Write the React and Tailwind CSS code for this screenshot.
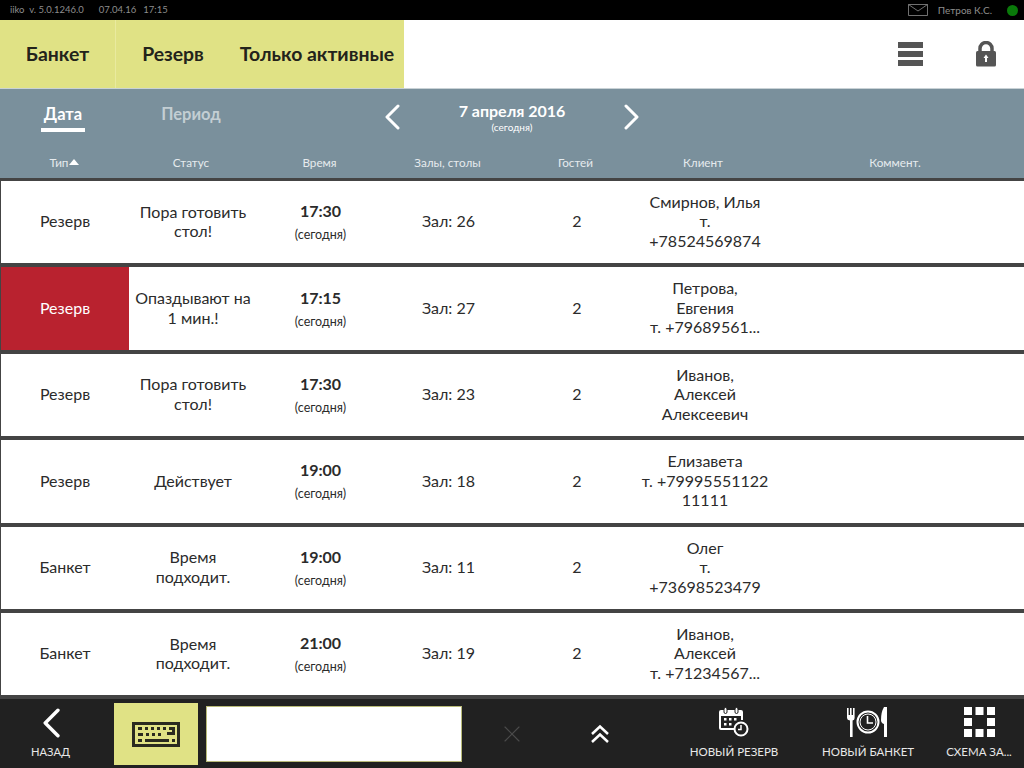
import { X } from 'lucide-react';

const rows = [
  { type: 'Резерв', status: ['Пора готовить', 'стол!'], time: '17:30', hall: 'Зал: 26', client: ['Смирнов, Илья', 'т.', '+78524569874'] },
  { type: 'Резерв', late: true, status: ['Опаздывают на', '1 мин.!'], time: '17:15', hall: 'Зал: 27', client: ['Петрова,', 'Евгения', 'т. +79689561...'] },
  { type: 'Резерв', status: ['Пора готовить', 'стол!'], time: '17:30', hall: 'Зал: 23', client: ['Иванов,', 'Алексей', 'Алексеевич'] },
  { type: 'Резерв', status: ['Действует'], time: '19:00', hall: 'Зал: 18', client: ['Елизавета', 'т. +79995551122', '11111'] },
  { type: 'Банкет', status: ['Время', 'подходит.'], time: '19:00', hall: 'Зал: 11', client: ['Олег', 'т.', '+73698523479'] },
  { type: 'Банкет', status: ['Время', 'подходит.'], time: '21:00', hall: 'Зал: 19', client: ['Иванов,', 'Алексей', 'т. +71234567...'] },
];

const Lines = ({ items, className }) => (
  <div className={className}>
    {items.map((line, idx) => (
      <div key={idx}>{line}</div>
    ))}
  </div>
);

const Chevron = ({ dir = 'left', className }) => (
  <svg className={className} width="16" height="26" viewBox="0 0 16 26" fill="none" stroke="#fff" strokeWidth="3" strokeLinecap="round" strokeLinejoin="round">
    <polyline points={dir === 'left' ? '14,2 3,13 14,24' : '2,2 13,13 2,24'} />
  </svg>
);

const DoubleUp = ({ className }) => (
  <svg className={className} width="20" height="20" viewBox="0 0 20 20" fill="none" stroke="#fff" strokeWidth="2.500">
    <polyline points="2,10 10,2.500 18,10" />
    <polyline points="2,18 10,10.500 18,18" />
  </svg>
);

const KeyboardIcon = () => (
  <svg width="48" height="25" viewBox="0 0 48 25">
    <path fill="#2a2a20" fillRule="evenodd" d="M0 0h48v25H0z M3 3v19h42V3z" />
    <g fill="#2a2a20">
      <rect x="6" y="5" width="4" height="3" />
      <rect x="13" y="5" width="3" height="3" />
      <rect x="19" y="5" width="3" height="3" />
      <rect x="25" y="5" width="3" height="3" />
      <rect x="31" y="5" width="3" height="3" />
      <path d="M37 5h6v8h-8v-3h5V8h-3z" />
      <rect x="6" y="11" width="5" height="3" />
      <rect x="14" y="11" width="3" height="3" />
      <rect x="20" y="11" width="3" height="3" />
      <rect x="26" y="11" width="3" height="3" />
      <rect x="6" y="17" width="4" height="3" />
      <rect x="13" y="17" width="24" height="3" />
      <rect x="40" y="17" width="3" height="3" />
    </g>
  </svg>
);

const CalendarClockIcon = () => (
  <svg width="30" height="30" viewBox="0 0 30 30">
    <path fill="none" stroke="#fff" strokeWidth="2" d="M17 22H2a1 1 0 0 1-1-1V5a1 1 0 0 1 1-1h20a1 1 0 0 1 1 1v8" />
    <path fill="#fff" d="M1 5h22v4H1z" />
    <rect x="5" y="0.5" width="3" height="6" rx="1.5" fill="#fff" stroke="#212121" />
    <rect x="16" y="0.5" width="3" height="6" rx="1.5" fill="#fff" stroke="#212121" />
    <g fill="#fff">
      <rect x="5" y="11" width="2.5" height="2.5" />
      <rect x="10" y="11" width="2.5" height="2.5" />
      <rect x="15" y="11" width="2.5" height="2.5" />
      <rect x="5" y="16" width="2.5" height="2.5" />
      <rect x="10" y="16" width="2.5" height="2.5" />
    </g>
    <circle cx="22" cy="22" r="6.5" fill="#212121" stroke="#fff" strokeWidth="2" />
    <path fill="none" stroke="#fff" strokeWidth="1.5" d="M22 18v4.5h-3" />
  </svg>
);

const BanquetIcon = () => (
  <svg width="42" height="30" viewBox="0 0 42 30">
    <path fill="#fff" d="M0 1h1.6v7H3V1h1.6v7H6V1h1.6v10q0 2-2 2.6V30H3V13.6Q0 13 0 11z" />
    <circle cx="21" cy="15" r="10.5" fill="none" stroke="#fff" strokeWidth="2" />
    <circle cx="21" cy="15" r="8" fill="none" stroke="#fff" strokeWidth="1" />
    <path fill="none" stroke="#fff" strokeWidth="1.6" d="M20.5 9v7h5.5" />
    <path fill="#fff" d="M37 0h3v30h-3V17q-3-1-3-4 0-8 3-13z" />
  </svg>
);

const SchemeIcon = () => (
  <svg width="31" height="30" viewBox="0 0 31 30" fill="#fff">
    <rect x="0" y="0" width="8" height="8" />
    <rect x="11.5" y="0" width="8" height="8" />
    <rect x="23" y="0" width="8" height="8" />
    <rect x="0" y="11" width="8" height="8" />
    <rect x="23" y="11" width="8" height="8" />
    <rect x="0" y="22" width="8" height="8" />
    <rect x="11.5" y="22" width="8" height="8" />
    <rect x="23" y="22" width="8" height="8" />
  </svg>
);

const App = () => {
  return (
    <div className="w-[1024px] h-[768px] overflow-hidden flex flex-col bg-white font-['Lato','Open_Sans',sans-serif] text-[#2b2b2b]">
      {/* Top status bar */}
      <div className="h-5 bg-black flex items-center text-[9.5px] text-[#8d8d8d] pl-[10px] pr-[6px] shrink-0">
        <span>iiko&nbsp; v. 5.0.1246.0</span>
        <span className="ml-[15px]">07.04.16</span>
        <span className="ml-[7px]">17:15</span>
        <svg className="ml-auto" width="20" height="12" viewBox="0 0 20 12" fill="none" stroke="#8d8d8d" strokeWidth="0.8">
          <path d="M.5.5h19v11H.5z M.5.5 10 7 19.500.5" />
        </svg>
        <span className="ml-[10px] text-[10px]">Петров К.С.</span>
        <span className="ml-[15px] w-[11px] h-[11px] rounded-full bg-[#0a7a0a]" />
      </div>

      {/* Filters */}
      <div className="h-[68px] flex shrink-0">
        <div className="w-[404px] bg-[#e0e285] flex items-center text-[19.4px] font-bold text-[#23231b]">
          <div className="w-[116px] h-full flex items-center justify-center border-r border-[#e9ea9f]">Банкет</div>
          <div className="w-[114px] h-full flex items-center justify-center">Резерв</div>
          <div className="flex-1 h-full flex items-center justify-center whitespace-nowrap">Только активные</div>
        </div>
        <div className="flex-1 flex items-center justify-end pr-[27px] gap-[52px]">
          <div className="w-[25px] flex flex-col gap-[3px]">
            <div className="h-[6px] bg-[#555]" />
            <div className="h-[6px] bg-[#555]" />
            <div className="h-[6px] bg-[#555]" />
          </div>
          <svg width="22" height="26" viewBox="0 0 22 26">
            <path fill="none" stroke="#555" strokeWidth="3.5" d="M5 11V7.500a6 6 0 0 1 12 0V11" />
            <rect x="1" y="10" width="20" height="15.500" rx="1.500" fill="#555" />
            <path fill="#fff" d="M11 13.500l2.500 3.500H12v4h-2v-4H8.500z" />
          </svg>
        </div>
      </div>

      {/* Date panel with table head */}
      <div className="h-[90px] shrink-0 bg-[#7a909c] border-t border-[#c9d2d6] flex flex-col text-white">
        <div className="h-[61px] flex items-start">
          <div className="w-[126px] pt-[14px] flex justify-center">
            <div className="px-[3px] border-b-[4px] border-white pb-[3px] text-[16.500px] font-bold leading-[22px]">Дата</div>
          </div>
          <div className="w-[130px] pt-[14px] text-center text-[16.500px] font-bold leading-[22px] text-[#c3ced3]">Период</div>
          <Chevron className="ml-[128px] mt-[15px]" />
          <div className="w-[224px] pt-[11px] text-center">
            <div className="text-[16px] font-bold leading-[22px]">7 апреля 2016</div>
            <div className="text-[10px] leading-[10px]">(сегодня)</div>
          </div>
          <Chevron dir="right" className="mt-[15px]" />
        </div>
        <div className="flex-1 grid grid-cols-[129px_124px_133px_123px_133px_122px_262px] text-[11.700px] text-center text-[#e6ebee] leading-[24px]">
          <div className="h-[24px] flex items-center justify-center gap-[1px]">
            Тип
            <svg width="10" height="6" viewBox="0 0 10 6" fill="#fff"><path d="M5 0l5 6H0z" /></svg>
          </div>
          <div>Статус</div>
          <div>Время</div>
          <div>Залы, столы</div>
          <div>Гостей</div>
          <div>Клиент</div>
          <div>Коммент.</div>
        </div>
      </div>

      {/* Reservation rows */}
      <div className="flex-1 border-t-[3px] border-[#444]">
        {rows.map((row, idx) => (
          <div
            key={idx}
            className="h-[86.400px] border-b-4 border-[#444] grid grid-cols-[129px_128px_127px_129px_128px_128px_255px] items-center text-center text-[16px] leading-[19.500px]"
          >
            <div className={row.late ? 'h-full pb-[2px] flex items-center justify-center bg-[#b9222f] text-white border-l border-[#444]' : 'h-full pb-[2px] flex items-center justify-center border-l border-[#444]'}>
              {row.type}
            </div>
            <Lines items={row.status} className="-mt-[2px]" />
            <div className="pt-[3px]">
              <div className="text-[16px] font-bold leading-[22px]">{row.time}</div>
              <div className="text-[12.500px] leading-[25px]">(сегодня)</div>
            </div>
            <div className="-mt-[2px]">{row.hall}</div>
            <div className="-mt-[2px]">2</div>
            <Lines items={row.client} className="-mt-[2px]" />
            <div />
          </div>
        ))}
      </div>

      {/* Bottom toolbar */}
      <div className="h-[69px] shrink-0 bg-[#212121] flex items-start text-[#e8e8e8] text-[11.500px]">
        <div className="w-[101px] flex flex-col items-center pt-[9px]">
          <Chevron className="w-[20px] h-[30px]" />
          <div className="leading-[16px] mt-[6px] text-[11.200px]">НАЗАД</div>
        </div>
        <div className="mt-[4px] ml-[13px] w-[84px] h-[62px] bg-[#e0e285] flex items-center justify-center">
          <KeyboardIcon />
        </div>
        <div className="mt-[7px] ml-[8px] w-[256px] h-[56px] bg-white border border-[#b8ba78]" />
        <X className="ml-[36px] mt-[21px] text-[#4b4b4b]" size={28} strokeWidth={1} />
        <DoubleUp className="ml-[64px] mt-[25px]" />
        <div className="ml-[79px] w-[90px] flex flex-col items-center pt-[8px] whitespace-nowrap">
          <CalendarClockIcon />
          <div className="leading-[16px] mt-[7px]">НОВЫЙ РЕЗЕРВ</div>
        </div>
        <div className="ml-[43px] w-[92px] flex flex-col items-center pt-[8px] whitespace-nowrap">
          <BanquetIcon />
          <div className="leading-[16px] mt-[7px]">НОВЫЙ БАНКЕТ</div>
        </div>
        <div className="ml-[33px] w-[64px] flex flex-col items-center pt-[8px] whitespace-nowrap">
          <SchemeIcon />
          <div className="leading-[16px] mt-[7px]">СХЕМА ЗА...</div>
        </div>
      </div>
    </div>
  );
};

export default App;
